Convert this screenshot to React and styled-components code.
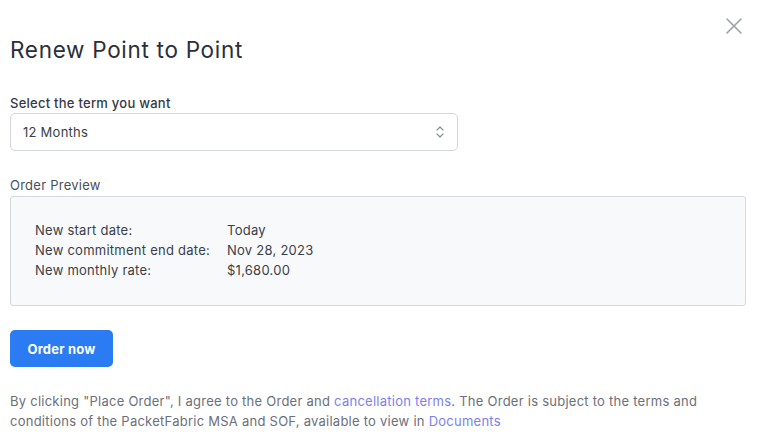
import styled, { createGlobalStyle } from 'styled-components';

const GlobalStyle = createGlobalStyle`
  body {
    margin: 0;
    background: #fff;
    font-family: Inter, "Noto Sans", sans-serif;
    letter-spacing: 0.25px;
  }
`;

const Modal = styled.div`
  position: relative;
  width: 762px;
  height: 444px;
  box-sizing: border-box;
  padding: 36px 16px 0 10px;
  color: #2f3440;
`;

const CloseButton = styled.button`
  position: absolute;
  top: 17px;
  right: 19px;
  width: 18px;
  height: 18px;
  padding: 0;
  border: none;
  background: none;
  display: flex;
  align-items: center;
  justify-content: center;
`;

const Title = styled.h2`
  margin: 0;
  font-size: 22.5px;
  font-weight: 400;
  line-height: 28px;
  letter-spacing: 0.7px;
  color: #2a2f3a;
`;

const Label = styled.label`
  display: block;
  margin-top: 31px;
  font-size: 13px;
  font-weight: 500;
  line-height: 16px;
  color: #343a46;
`;

const Select = styled.div`
  margin-top: 2px;
  width: 448px;
  height: 38px;
  box-sizing: border-box;
  border: 1px solid #d3d6dc;
  border-radius: 5px;
  padding: 0 12px;
  display: flex;
  align-items: center;
  justify-content: space-between;
  font-size: 13px;
  color: #3a3f4a;
`;

const SectionTitle = styled.div`
  margin-top: 26px;
  font-size: 13px;
  line-height: 16px;
  color: #4a4f5a;
`;

const PreviewBox = styled.div`
  margin-top: 3px;
  width: 736px;
  height: 110px;
  box-sizing: border-box;
  background: #f8f9fb;
  border: 1px solid #d5d8dd;
  border-radius: 3px;
  padding: 23px 24px;
  display: grid;
  grid-template-columns: 192px auto;
  grid-auto-rows: 20px;
  align-content: start;
  font-size: 13px;
  color: #3a3f4a;
`;

const Cell = styled.span`
  line-height: 20px;
`;

const OrderButton = styled.button`
  margin-top: 24px;
  width: 103px;
  height: 37px;
  border: none;
  border-radius: 5px;
  background: #2b7bf3;
  color: #fff;
  font-family: inherit;
  font-size: 13px;
  font-weight: 700;
  letter-spacing: 0.2px;
  display: block;
`;

const Terms = styled.p`
  margin: 24px 0 0;
  font-size: 13px;
  line-height: 20px;
  color: #6b707a;
  max-width: 710px;
`;

const Link = styled.a`
  color: #7b80f5;
  text-decoration: none;
`;

const preview = [
  ['New start date:', 'Today'],
  ['New commitment end date:', 'Nov 28, 2023'],
  ['New monthly rate:', '$1,680.00'],
];

export default function App() {
  return (
    <>
      <GlobalStyle />
      <Modal>
        <CloseButton aria-label="Close">
          <svg width="16" height="16" viewBox="0 0 16 16" fill="none" stroke="#9aa1ad" strokeWidth="1.6" strokeLinecap="round">
            <path d="M1 1l14 14M15 1L1 15" />
          </svg>
        </CloseButton>
        <Title>Renew Point to Point</Title>
        <Label>Select the term you want</Label>
        <Select>
          <span>12 Months</span>
          <svg width="10" height="14" viewBox="0 0 10 14" fill="none" stroke="#8a909b" strokeWidth="1.2" strokeLinecap="round" strokeLinejoin="round">
            <path d="M2 5l3-3 3 3M2 9l3 3 3-3" />
          </svg>
        </Select>
        <SectionTitle>Order Preview</SectionTitle>
        <PreviewBox>
          {preview.map(([k, v]) => [
            <Cell key={k}>{k}</Cell>,
            <Cell key={v}>{v}</Cell>,
          ])}
        </PreviewBox>
        <OrderButton>Order now</OrderButton>
        <Terms>
          By clicking "Place Order", I agree to the Order and <Link href="#">cancellation terms</Link>. The Order is subject to the terms and conditions of the PacketFabric MSA and SOF, available to view in <Link href="#">Documents</Link>
        </Terms>
      </Modal>
    </>
  );
}
